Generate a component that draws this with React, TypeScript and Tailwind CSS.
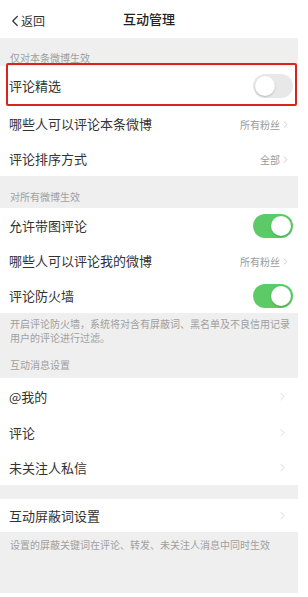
import { ChevronLeft, ChevronRight } from 'lucide-react';

const font = { fontFamily: '"Noto Sans CJK SC", "Noto Sans", sans-serif' };

const Toggle = ({ on }: { on: boolean }) => (
  <div
    className={`flex h-[24px] w-[40px] items-center rounded-full p-[2px] ${
      on ? 'justify-end bg-[#5ccb67]' : 'justify-start bg-[#e8e8e8]'
    }`}
  >
    <div className="h-[20px] w-[20px] rounded-full bg-white shadow-[0_1px_2px_rgba(0,0,0,0.2)]" />
  </div>
);

const Row = ({
  label,
  value,
  toggle,
  chevron,
  h,
}: {
  label: string;
  value?: string;
  toggle?: boolean;
  chevron?: boolean;
  h: string;
}) => (
  <div className={`flex items-center justify-between bg-white pl-[9px] pr-[5px] ${h}`}>
    <span className="text-[13px] text-[#333]">{label}</span>
    {toggle !== undefined && <Toggle on={toggle} />}
    {value && (
      <span className="flex items-center pr-[2px] text-[10px] text-[#9a9a9a]">
        {value}
        <ChevronRight className="h-[11px] w-[11px] text-[#b5b5b5]" strokeWidth={1.5} />
      </span>
    )}
    {chevron && <ChevronRight className="mr-[4px] h-[13px] w-[13px] text-[#cccccc]" strokeWidth={1.3} />}
  </div>
);

const Header = ({ text, h, pb }: { text: string; h: string; pb: string }) => (
  <div className={`flex items-end bg-[#efefef] pl-[10px] text-[10px] text-[#a0a0a0] ${h} ${pb}`}>{text}</div>
);

export default function App() {
  return (
    <div className="min-h-[597px] w-[308px] bg-white" style={font}>
      <div className="relative w-[298px]">
        <div className="relative flex h-[38px] items-center justify-center bg-white">
          <div className="absolute left-[6px] top-[12px] flex items-center text-[12px] text-[#333]">
            <ChevronLeft className="h-[18px] w-[18px] -mr-[3px]" strokeWidth={1.6} />
            返回
          </div>
          <span className="text-[13px] font-medium text-[#222]">互动管理</span>
        </div>

        <Header text="仅对本条微博生效" h="h-[28px]" pb="pb-[1px]" />
        <Row label="评论精选" toggle={false} h="h-[40px]" />
        <Row label="哪些人可以评论本条微博" value="所有粉丝" h="h-[36px]" />
        <Row label="评论排序方式" value="全部" h="h-[34px]" />

        <Header text="对所有微博生效" h="h-[32px]" pb="pb-[4px]" />
        <Row label="允许带图评论" toggle h="h-[35px]" />
        <Row label="哪些人可以评论我的微博" value="所有粉丝" h="h-[36px]" />
        <Row label="评论防火墙" toggle h="h-[34px]" />

        <div className="flex h-[65px] flex-col bg-[#efefef] px-[10px] pt-[4px] text-[10px] leading-[14px] text-[#a0a0a0]">
          <p className="whitespace-nowrap">开启评论防火墙，系统将对含有屏蔽词、黑名单及不良信用记录</p>
          <p>用户的评论进行过滤。</p>
          <p className="mt-[13px]">互动消息设置</p>
        </div>
        <Row label="@我的" chevron h="h-[37px]" />
        <Row label="评论" chevron h="h-[35px]" />
        <Row label="未关注人私信" chevron h="h-[35px]" />

        <div className="h-[14px] bg-[#efefef]" />
        <Row label="互动屏蔽词设置" chevron h="h-[33px]" />
        <div className="h-[61px] bg-[#efefef] px-[10px] pt-[6px] text-[10px] leading-[13px] text-[#a0a0a0]">
          设置的屏蔽关键词在评论、转发、未关注人消息中同时生效
        </div>

        <div className="pointer-events-none absolute left-[6px] top-[63px] h-[43px] w-[291px] rounded-[2px] border-2 border-[#d9231c]" />
      </div>
    </div>
  );
}
